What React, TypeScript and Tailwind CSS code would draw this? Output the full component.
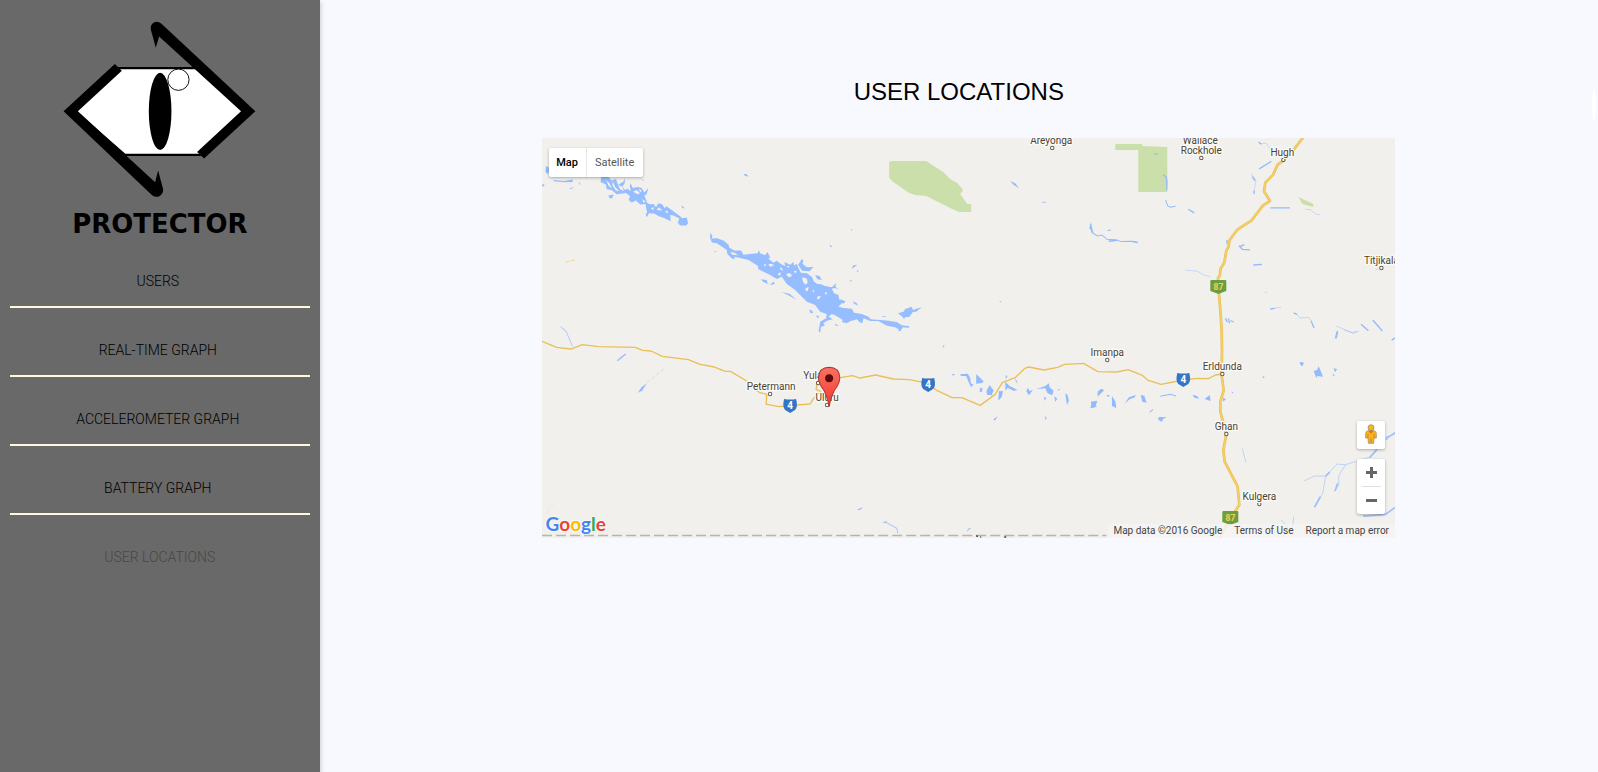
import React from "react";

const navItems = ["USERS", "REAL-TIME GRAPH", "ACCELEROMETER GRAPH", "BATTERY GRAPH"];

function Logo() {
  return (
    <svg viewBox="0 0 320 239" className="h-[239px] w-[320px] max-w-full" role="img" aria-label="Protector">
      <g transform="scale(0.33333)">
        <path d="M355 204 H590 L735 334 L605 465 H375 L225 334 Z" fill="#fff" stroke="#000" strokeWidth="7" />
        <path
          d="M345 192 L191 334 L456 585 Q468 595 480 588 Q491 581 490 568 L475 512 L466 547 L234 334 L366 212 Z"
          fill="#000"
        />
        <path
          d="M613 476 L767 334 L485 71 Q473 61 461 68 Q451 74 453 88 L468 143 L478 109 L724 334 L592 456 Z"
          fill="#000"
        />
        <circle cx="536" cy="239" r="32" fill="#fff" stroke="#111" strokeWidth="3" />
        <ellipse cx="481" cy="334" rx="34" ry="116" fill="#000" />
      </g>
      <text x="160" y="233" textAnchor="middle" className="font-['DejaVu_Sans',sans-serif] text-[26px] font-bold">
        PROTECTOR
      </text>
    </svg>
  );
}

type Place = { name: string; x: number; y: number; dot?: [number, number] };

const places: Place[] = [
  { name: "Areyonga", x: 1051, y: 144, dot: [1052, 148] },
  { name: "Wallace", x: 1200, y: 144 },
  { name: "Rockhole", x: 1201, y: 154, dot: [1201, 158] },
  { name: "Hugh", x: 1282, y: 156, dot: [1283, 160] },
  { name: "Titjikala", x: 1381, y: 264, dot: [1381, 268] },
  { name: "Imanpa", x: 1107, y: 356, dot: [1107, 360] },
  { name: "Erldunda", x: 1222, y: 370, dot: [1222, 374] },
  { name: "Ghan", x: 1226, y: 430, dot: [1226, 434] },
  { name: "Kulgera", x: 1259, y: 500, dot: [1259, 504] },
  { name: "Petermann", x: 771, y: 390, dot: [770, 394] },
  { name: "Yulara", x: 817, y: 379, dot: [818, 383] },
  { name: "Uluru", x: 827, y: 401, dot: [827, 405] },
];

function Shield4({ x, y }: { x: number; y: number }) {
  return (
    <g transform={`translate(${x} ${y})`}>
      <path d="M-6 -6 Q0 -5 6 -6 Q8 2 5 5 L0 8 L-5 5 Q-8 2 -6 -6Z" fill="#3575c8" />
      <text y="4" textAnchor="middle" fill="#fff" className="font-[Roboto,sans-serif] text-[10px] font-bold">4</text>
    </g>
  );
}

function Shield87({ x, y }: { x: number; y: number }) {
  return (
    <g transform={`translate(${x} ${y})`}>
      <path d="M-7 -7 H7 Q8 -7 8 -6 V4 Q5 5 0 7 Q-5 5 -8 4 V-6 Q-8 -7 -7 -7Z" fill="#6a9f40" />
      <text y="3" textAnchor="middle" fill="#f2cc50" className="font-[Roboto,sans-serif] text-[9px] font-bold">87</text>
    </g>
  );
}

function MapCanvas() {
  return (
    <svg viewBox="542 138 853 400" preserveAspectRatio="xMidYMid slice" className="block h-full w-full" aria-label="Map">
      <g fill="#cadfaa">
        <path d="M889 162 L891 161 H926 L943 172 L950 179 L957 183 L963 190 L960 194 L967 204 H971 V212 H959 L952 209 L926 196 L915 195 L909 193 L893 182 L889 178Z" />
        <path d="M1115 144 H1142 V146 L1167 147 V192 H1138 V150 H1115Z" />
        <path d="M1298 197 L1313 204 V207 L1302 204Z" />
      </g>

      <g transform="translate(530 130) scale(0.33333)" fill="#96bdff">
        <path d="M48 108 L56 112 58 125 52 134 46 124Z M72 150 L100 153 128 149 128 156 100 157 70 154Z M36 164 L43 163 42 170 36 168Z M145 155 L153 164 148 163Z M118 175 L130 172 124 178Z M235 197 L251 194 246 206 238 204Z M334 147 L344 152 338 152Z M454 226 L464 235 457 235Z M640 132 L650 133 655 140 645 138Z M552 363 L562 365 553 366Z" />
        <path d="M213 141 L235 141 245 152 258 147 264 165 280 155 285 145 284 160 277 170 285 180 298 172 302 160 308 174 322 171 335 174 343 188 355 174 350 192 343 197 347 207 352 220 360 223 370 222 378 232 385 220 395 222 405 236 408 228 425 240 450 259 457 265 470 263 474 280 468 287 450 287 443 278 448 266 430 257 420 255 422 274 405 266 385 258 372 251 357 250 350 262 347 255 351 246 346 222 330 224 318 212 305 218 296 210 300 199 288 189 260 193 245 180 230 178 227 163 212 157Z" />
        <path d="M541 308 L547 318 545 326 561 325 580 332 596 345 597 353 612 362 633 362 640 374 660 372 683 370 686 360 690 370 705 376 712 366 720 382 715 386 730 398 740 392 752 402 765 408 763 396 780 404 790 396 792 406 800 402 806 416 812 428 830 430 845 440 852 455 862 462 870 462 885 468 905 472 918 460 916 470 926 478 915 474 905 476 912 490 925 495 927 508 945 515 935 520 925 530 940 534 965 536 972 548 995 552 1015 560 1022 568 1050 570 1075 572 1100 576 1115 586 1138 589 1136 593 1118 592 1112 602 1095 592 1070 587 1045 573 1020 573 1000 565 997 578 990 578 980 568 960 574 950 580 935 576 938 570 915 556 905 552 895 560 908 568 890 572 880 580 884 586 872 592 870 606 866 600 870 575 888 565 890 552 870 545 855 525 830 515 795 480 770 462 755 440 740 447 720 435 685 418 683 407 655 390 630 384 612 380 615 386 606 386 592 372 590 360 578 352 560 340 545 338 540 322Z" />
        <path d="M804 404 L815 388 820 391 817 401 830 412 850 411 838 424 816 422Z M855 436 L868 438 875 450 862 448Z M692 448 L710 450 713 462 700 456Z M710 458 L722 463 730 455 735 460 725 465Z M754 486 L778 491 800 510 775 496Z M838 538 L846 542 850 550 840 548Z M858 555 L868 560 862 565Z M968 514 L980 520 983 527 972 521Z M930 508 L946 514 940 522Z M1055 558 L1072 560 1060 562Z M1103 550 L1120 545 1125 537 1145 530 1148 540 1175 531 1158 545 1148 546 1138 560 1125 562 1122 567 1114 558Z M914 582 L926 586 918 588Z M958 452 L966 450 962 455Z M960 298 L968 299 965 302Z M898 343 L906 350 902 353Z M970 405 L981 406 974 410 964 417Z M980 420 L986 424 982 427Z M1407 513 L1416 515 1410 517Z M1238 648 L1243 651 1238 652Z" />
        <path d="M1440 153 L1455 160 1467 175 1450 165Z M1536 215 L1550 217 1538 219Z M1682 277 L1687 300 1692 311 1677 296Z" />
        <g fill="#f2f0ec">
          <path d="M228 150 L238 160 246 176 236 168Z M248 155 L256 172 268 184 257 182 247 166Z M264 165 L276 170 282 183 270 178Z M290 176 L300 170 302 183Z M309 185 L320 180 330 190 322 193Z M324 178 L334 180 333 188Z M362 235 L371 232 370 241Z M380 240 L386 232 397 242Z M404 246 L412 242 414 250Z M336 207 L348 216 340 218Z" />
          <path d="M600 366 L612 368 624 376 607 374Z M715 403 L724 401 732 405 720 411Z M700 404 L708 402 706 410Z M752 410 L760 422 750 418Z M742 432 L752 427 750 438Z M768 410 L775 407 778 413Z M768 432 L780 429 786 438 775 442Z M790 424 L800 422 797 430Z M815 442 L829 445 833 457 827 464 820 458Z M826 475 L836 470 833 483 827 483Z M846 480 L853 482 850 488Z M864 498 L872 497 867 508 860 506Z M883 488 L891 486 888 495Z" />
        </g>
      </g>

      <g transform="translate(1090 130) scale(0.33333)" fill="none" stroke="#92baff" strokeWidth="4">
        <path d="M0 282 L5 308 22 318 35 315 50 328 80 330 92 335 125 334 142 337 M52 302 L62 300 M226 210 L232 228 240 232 256 229" strokeWidth="3" />
        <path d="M55 334 L80 331 M125 334 L142 338 M294 238 L312 249 M219 135 L227 140 230 155 229 180 M193 74 L202 70" />
        <path d="M507 117 L543 94 M505 36 L513 43 M486 140 L494 153 M492 182 L491 192 M540 234 L599 234 M489 405 L515 403 M446 347 L456 358 479 360 M448 350 L462 344 M410 330 L410 342 M540 537 L553 535 M405 565 L411 577 M414 565 L418 580 M421 572 L430 576 M610 549 L620 553 M662 572 L671 594 M812 583 L834 602 M847 570 L876 603 M904 630 L914 624 M735 625 L741 603" />
        <path d="M508 42 L528 40 543 62 M483 130 L497 152 490 188 M645 238 L660 239 677 253 689 254 M285 420 L322 424 340 435 360 440 M553 534 L572 532 M620 553 L628 564 655 562 662 572 M738 588 L785 608 800 603 M523 488 L530 486 M855 420 L864 416" strokeWidth="2" opacity=".7" />
      </g>
      <g transform="translate(1090 330) scale(0.33333)" fill="#92baff">
        <path d="M628 95 L641 98 636 109 630 104Z M670 123 L680 120 685 109 692 125 698 140 680 138 678 145Z M729 115 L740 117 735 127Z M727 130 L733 138 728 138Z M22 185 L33 176 42 181 30 192 22 200Z M48 196 L57 195 56 202Z M65 198 L76 215 78 234 65 228Z M2 215 L22 212 12 225 20 230 4 234Z M102 222 L116 202 136 195 134 202 118 208Z M151 195 L162 197 169 218 156 215Z M307 194 L320 198 327 206 312 203Z M343 207 L358 195 361 213Z M398 203 L407 208 398 215Z M424 183 L430 190 425 190Z M515 142 L522 138 521 144Z M205 261 L230 262 218 267 215 276 204 269Z" />
      </g>
      <g transform="translate(1090 330) scale(0.33333)" fill="none" stroke="#92baff" strokeWidth="3">
        <path d="M210 199 L240 193 257 198 M178 247 L188 238 M738 25 L742 5 M904 30 L914 24" />
        <path d="M914 310 L890 322 888 330 M860 358 L838 383 M718 426 L706 438 M690 500 L672 532 M742 460 L734 482 M818 558 L860 555 885 553 914 532 M914 308 L888 325" strokeWidth="5" opacity=".85" />
        <path d="M865 350 L835 382 765 404 740 402 706 438 672 438 640 453 M706 438 L697 490 673 530 M765 404 L745 438 745 465 732 485 M456 355 L467 398 M610 560 L606 600 M573 570 L605 605 M762 0 L790 10 805 3" strokeWidth="2.5" opacity=".65" />
      </g>
      <g transform="translate(800 330) scale(0.33333)" fill="#92baff">
        <path d="M453 133 L464 132 460 137Z M480 133 L503 131 510 145 512 160 520 164 512 171 505 155 498 138 482 138Z M528 133 L540 143 551 155 544 159 528 161Z M537 173 L547 175 545 186 536 184 541 179Z M559 182 L568 165 580 181 575 196 560 194Z M596 184 L608 183 605 200 594 212Z M617 135 L622 139 616 148Z M615 155 L628 168 652 180 640 182 622 173 616 183Z M645 144 L653 160 647 156Z M678 183 L684 173 687 183 698 180 686 196Z M708 178 L735 168 746 160 748 172 760 182 756 196 742 190 735 175Z M732 200 L739 205 732 212Z M762 198 L771 206 765 216Z M772 179 L781 176 775 182Z M795 190 L802 195 806 212 800 225Z M580 268 L592 259 584 272Z M733 258 L740 264 736 270Z M170 539 L189 531 180 540Z M246 577 L260 573 258 579Z M498 606 L505 595 515 592Z M870 235 L875 220 891 214 885 230Z M55 0 L62 0 58 8Z M293 0 L303 0 298 4Z M427 48 L433 46 431 52Z" />
        <path d="M258 577 L290 595 293 610" fill="none" stroke="#a8c5f5" strokeWidth="3" />
      </g>
      <g transform="translate(530 330) scale(0.33333)" fill="none" stroke="#92baff">
        <path d="M262 92 L287 72" strokeWidth="4" />
        <path d="M325 187 L335 172 348 162 336 182Z" fill="#92baff" strokeWidth="1" />
        <path d="M92 -10 L108 4 128 50" strokeWidth="3" opacity=".65" />
        <path d="M350 158 L400 118" strokeWidth="2" strokeDasharray="12 6" opacity=".6" />
        <path d="M106 -202 L120 -208 135 -209" stroke="#f2d59b" strokeWidth="3" strokeDasharray="14 4" />
        <path d="M52 550 L58 532 76 518" stroke="#e3e2df" strokeWidth="2" />
      </g>

      <path d="M542 535.5 H1106" stroke="#b6b4ad" strokeWidth="1.5" strokeDasharray="10 4" fill="none" />
      <path d="M976 536 h1 v1 M980 537 h1 M1004 537 h2" stroke="#4e4535" strokeWidth="1.5" fill="none" />

      <g fill="none" stroke="#e9bf58" strokeLinejoin="round" strokeLinecap="round">
        <path
          transform="translate(530 330) scale(0.33333)"
          strokeWidth="4"
          d="M36 34 L80 52 123 57 157 44 205 50 316 52 338 61 363 63 397 79 475 89 510 103 553 111 586 124 601 124 650 153 675 178 690 188 710 193 708 222 745 230 785 226 840 222 848 208 858 197 872 185 858 178 862 155 930 143 967 137 990 144 1036 135 1090 147 1138 149 1195 160 1218 180 1266 203 1295 203 1350 226 1395 193 1416 158 1455 143 1485 114 1495 111 1542 120 1582 112 1603 103 1660 100 1703 125 1760 126 1793 119 1835 135 1852 150 1892 163 1960 150 1998 145 2035 146 2055 135 2076 132"
        />
        <g transform="translate(1090 130) scale(0.33333)">
          <path
            strokeWidth="8"
            stroke="#e8bb50"
            d="M640 20 L610 60 579 92 562 104 548 135 525 158 521 184 539 213 517 228 484 271 442 298 418 330 414 352 408 362 402 398 390 418 389 435 383 445 386 490 390 540 394 600 395 660 394 735 400 782 390 815 390 845 408 912 399 960 403 995 442 1070 447 1125 430 1150"
          />
          <path
            strokeWidth="5"
            stroke="#f3cf66"
            d="M640 20 L610 60 579 92 562 104 548 135 525 158 521 184 539 213 517 228 484 271 442 298 418 330 414 352 408 362 402 398 390 418 389 435 383 445 386 490 390 540 394 600 395 660 394 735 400 782 390 815 390 845 408 912 399 960 403 995 442 1070 447 1125 430 1150 405 1190 390 1225"
          />
        </g>
      </g>

      <Shield4 x={790} y={405} />
      <Shield4 x={928} y={384} />
      <Shield4 x={1183} y={379} />
      <Shield87 x={1218} y={287} />
      <Shield87 x={1230} y={518} />

      {places.map((p) => (
        <g key={p.name}>
          {p.dot && <circle cx={p.dot[0]} cy={p.dot[1]} r="1.7" fill="#fff" stroke="#61594c" strokeWidth="1" />}
          <text
            x={p.x}
            y={p.y}
            textAnchor="middle"
            fill="#4b4230"
            stroke="#fbfaf7"
            strokeWidth="2.5"
            strokeLinejoin="round"
            paintOrder="stroke"
            className="font-[Roboto,sans-serif] text-[10px]"
          >
            {p.name}
          </text>
        </g>
      ))}

      <defs>
        <linearGradient id="pin" x1="0" y1="0" x2="0" y2="1">
          <stop offset="0" stopColor="#fb7064" />
          <stop offset="1" stopColor="#f03a30" />
        </linearGradient>
      </defs>
      <g transform="translate(800 330) scale(0.33333)">
        <path
          d="M87 230 Q84 205 72 182 Q55 160 55 143 Q56 113 87 112 Q118 113 119 143 Q119 160 102 182 Q90 205 87 230Z"
          fill="url(#pin)"
          stroke="#b3342c"
          strokeWidth="3"
        />
        <circle cx="87" cy="145" r="12" fill="#5a0c0a" />
      </g>
    </svg>
  );
}

function Pegman() {
  return (
    <svg viewBox="0 0 36 60" className="mb-0.5 h-[20px] w-[12px]" aria-hidden="true">
      <path
        d="M12 20 C5 20 2 23 2 29 V42 H9 L10 58 H17 L18 44 L19 58 H26 L27 42 H34 V29 C34 23 31 20 24 20Z"
        fill="#fbb41a"
        stroke="#a08050"
        strokeWidth="2"
      />
      <path d="M10 20 L18 29 26 20Z" fill="#e8672c" />
      <path d="M9 30 V42 M27 30 V42" stroke="#b9791c" strokeWidth="2" />
      <circle cx="18" cy="11" r="9" fill="#fbb41a" stroke="#8f8262" strokeWidth="2" />
    </svg>
  );
}

function LocationMap() {
  return (
    <section aria-label="User locations map" className="relative h-[400px] overflow-hidden bg-[#f2f0ec] font-[Roboto,sans-serif]">
      <MapCanvas />

      <div className="absolute left-[7px] top-[10px] flex h-[29px] rounded-xs bg-white text-[11px] leading-[29px] shadow-[0_1px_3px_rgba(0,0,0,0.3)]">
        <button type="button" className="w-[38px] border-r border-[#e6e6e6] text-center font-medium text-black">Map</button>
        <button type="button" className="w-[56px] text-center text-[#565656]">Satellite</button>
      </div>

      <button
        type="button"
        aria-label="Street View"
        className="absolute bottom-[89px] right-[10px] flex size-7 items-center justify-center rounded-xs bg-white shadow-[0_1px_3px_rgba(0,0,0,0.3)]"
      >
        <Pegman />
      </button>

      <div className="absolute bottom-[24px] right-[10px] flex w-7 flex-col items-center rounded-xs bg-white shadow-[0_1px_3px_rgba(0,0,0,0.3)]">
        <button type="button" aria-label="Zoom in" className="flex h-[27px] w-7 items-center justify-center">
          <svg viewBox="0 0 11 11" className="size-[11px]" aria-hidden="true">
            <path d="M0 5.5H11M5.5 0V11" stroke="#666" strokeWidth="3" />
          </svg>
        </button>
        <span className="h-px w-[19px] bg-[#e0e0e0]" />
        <button type="button" aria-label="Zoom out" className="flex h-[27px] w-7 items-center justify-center">
          <svg viewBox="0 0 11 11" className="size-[11px]" aria-hidden="true">
            <path d="M0 5.5H11" stroke="#666" strokeWidth="3" />
          </svg>
        </button>
      </div>

      <a
        href="#google"
        className="absolute bottom-0 left-1 font-[Lato,sans-serif] text-[19px] font-bold leading-[28px] [text-shadow:0_0_2px_#fff,0_0_2px_#fff]"
      >
        <span className="text-[#4285f4]">G</span>
        <span className="text-[#ea4335]">o</span>
        <span className="text-[#fbbc05]">o</span>
        <span className="text-[#4285f4]">g</span>
        <span className="text-[#34a853]">l</span>
        <span className="text-[#ea4335]">e</span>
      </a>

      <div className="absolute bottom-0 right-0 flex h-[14px] gap-3 bg-[#f5f5f5]/75 pl-[5px] pr-[6px] text-[10px] leading-[14px] text-[#444]">
        <span>Map data ©2016 Google</span>
        <a href="#terms">Terms of Use</a>
        <a href="#report">Report a map error</a>
      </div>
    </section>
  );
}

export default function App() {
  return (
    <div className="flex min-h-screen overflow-hidden bg-[#f8f9ff]">
      <aside className="z-10 w-1/5 shrink-0 bg-[#696969] font-[Roboto,sans-serif] shadow-[0_2px_5px_rgba(0,0,0,0.25)]">
        <Logo />
        <nav className="mx-[10px] text-center text-[14px] font-light leading-5 text-black">
          {navItems.map((item) => (
            <a key={item} href={`#${item.toLowerCase().replace(/ /g, "-")}`} className="block border-b-2 border-[#fff8dc] pb-[15px] pr-1 pt-8">
              {item}
            </a>
          ))}
          <a href="#user-locations" aria-current="page" className="block pt-8 text-[#474747]">
            USER LOCATIONS
          </a>
        </nav>
      </aside>

      <main className="relative min-w-0 flex-1">
        <h1 className="pb-[30px] pt-[76px] text-center font-['Liberation_Sans',Arial,sans-serif] text-[24px] leading-8 text-black">
          USER LOCATIONS
        </h1>
        <div className="pl-[222px] pr-[203px]">
          <LocationMap />
        </div>
        <span className="absolute right-[2px] top-[90px] h-8 w-[4px] rounded-[50%] bg-white" />
      </main>
    </div>
  );
}
